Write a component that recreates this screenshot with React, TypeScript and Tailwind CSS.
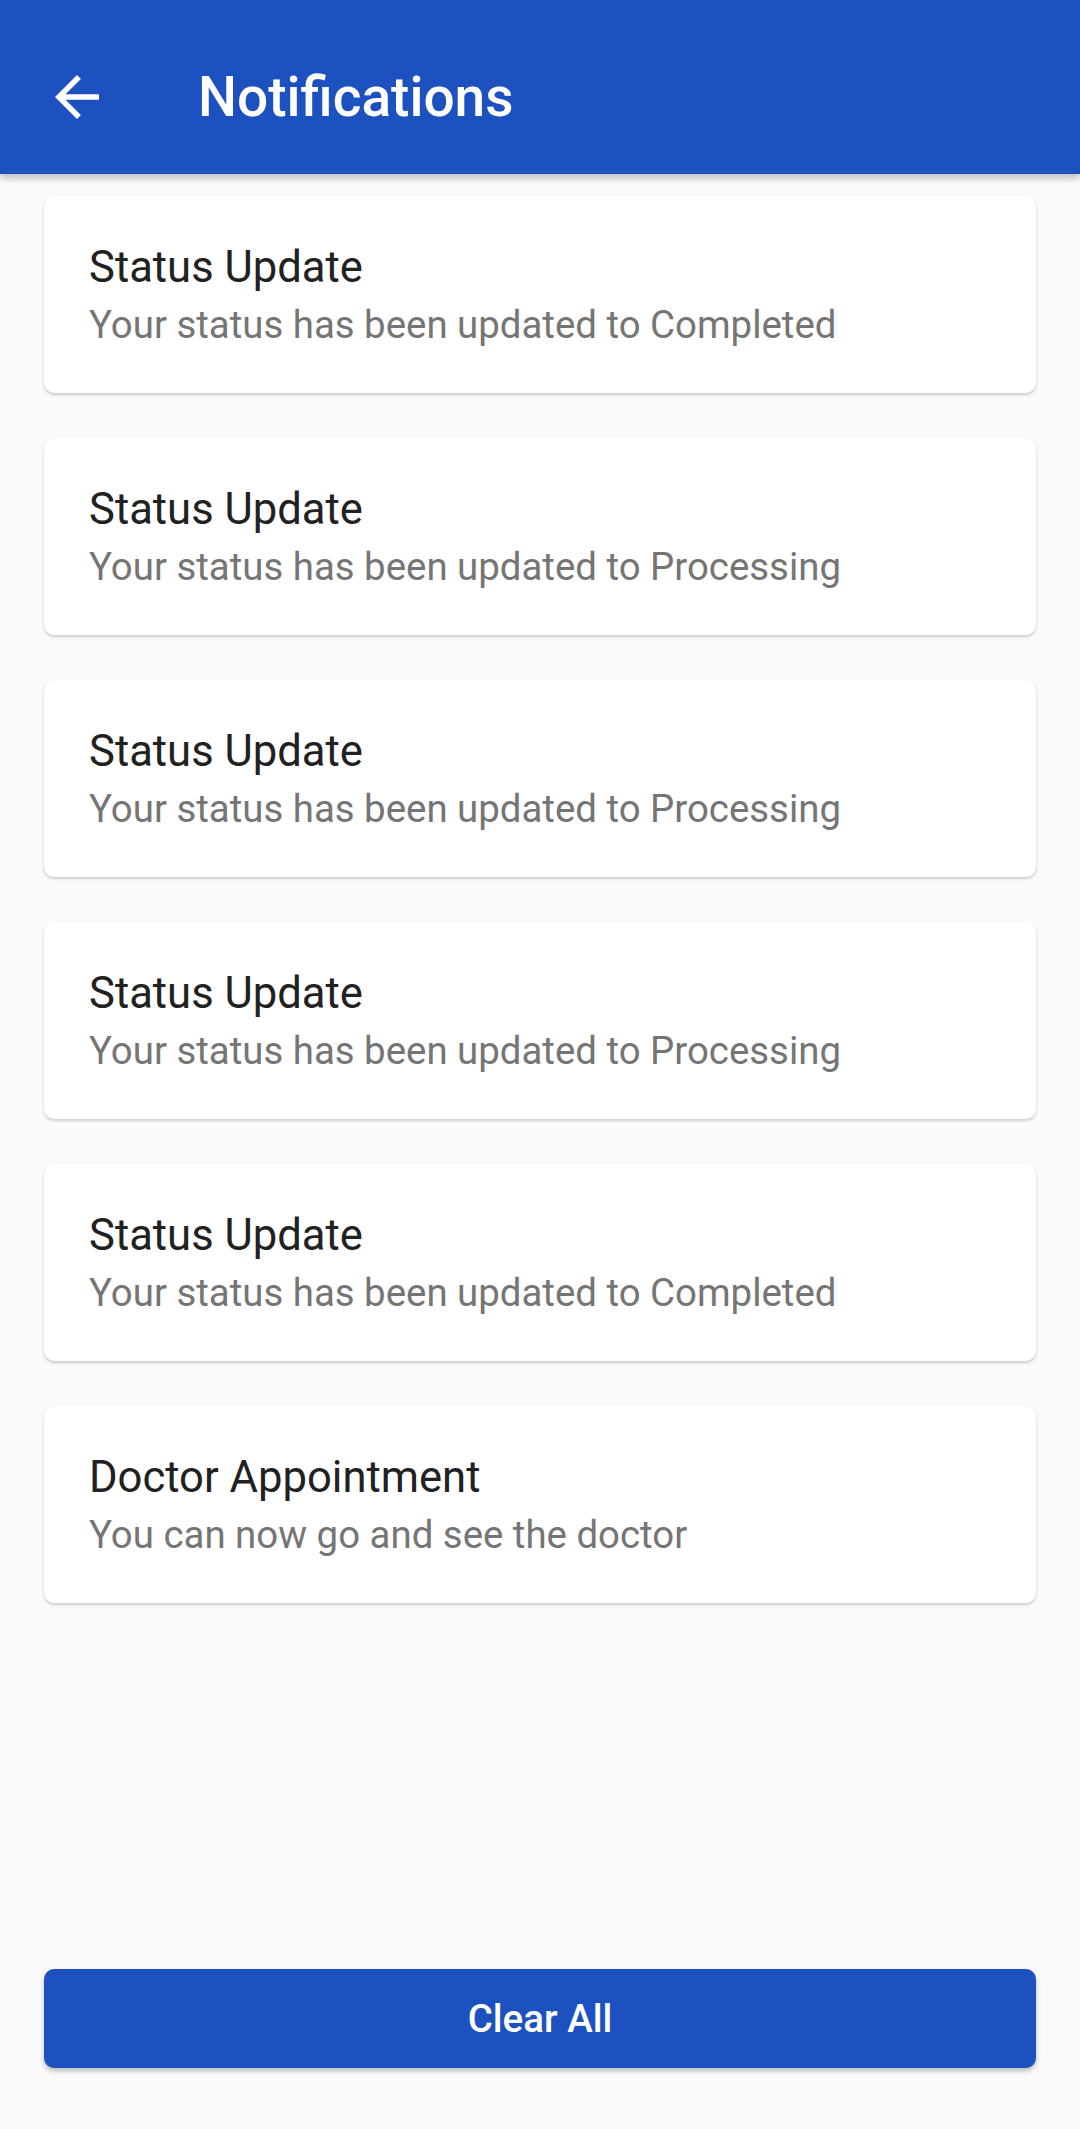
import React from 'react';

interface NotificationItem {
  id: number;
  title: string;
  message: string;
}

const notifications: NotificationItem[] = [
  { id: 1, title: 'Status Update', message: 'Your status has been updated to Completed' },
  { id: 2, title: 'Status Update', message: 'Your status has been updated to Processing' },
  { id: 3, title: 'Status Update', message: 'Your status has been updated to Processing' },
  { id: 4, title: 'Status Update', message: 'Your status has been updated to Processing' },
  { id: 5, title: 'Status Update', message: 'Your status has been updated to Completed' },
  { id: 6, title: 'Doctor Appointment', message: 'You can now go and see the doctor' },
];

function BackArrow() {
  return (
    <svg width="66" height="66" viewBox="0 0 24 24" fill="#ffffff">
      <path d="M20 11H7.83l5.59-5.59L12 4l-8 8 8 8 1.41-1.41L7.83 13H20v-2z" />
    </svg>
  );
}

function NotificationCard({ item }: { item: NotificationItem }) {
  return (
    <div className="mx-[44px] rounded-[10px] bg-white px-[45px] pt-[46px] pb-[46px] shadow-[0_2px_3px_rgba(0,0,0,0.18),0_0_1px_rgba(0,0,0,0.08)]">
      <div className="text-[43.6px] leading-[52px] text-[#212121]">{item.title}</div>
      <div className="mt-[8px] text-[38.4px] leading-[45px] text-[#757575]">{item.message}</div>
    </div>
  );
}

export default function App() {
  return (
    <div
      className="flex min-h-[2129px] flex-col bg-[#fafafa]"
      style={{ fontFamily: 'Roboto, "Noto Sans", sans-serif' }}
    >
      {/* Header */}
      <div className="relative z-10 flex h-[174px] items-center bg-[#1e51c0] pt-[20px] shadow-[0_4px_8px_rgba(0,0,0,0.25)]">
        <div className="ml-[44px] flex h-[66px] w-[66px] items-center justify-center">
          <BackArrow />
        </div>
        <h1 className="ml-[88px] text-[55px] font-medium leading-[64px] text-white">Notifications</h1>
      </div>

      {/* List */}
      <div className="flex flex-col gap-[45px] pt-[22px]">
        {notifications.map((n) => (
          <NotificationCard key={n.id} item={n} />
        ))}
      </div>

      {/* Footer */}
      <div className="mt-auto px-[44px] pb-[61px]">
        <button className="flex h-[99px] w-full items-center justify-center rounded-[10px] bg-[#1e51c0] text-[38.5px] font-medium text-white shadow-[0_3px_5px_rgba(0,0,0,0.25)]">
          Clear All
        </button>
      </div>
    </div>
  );
}
